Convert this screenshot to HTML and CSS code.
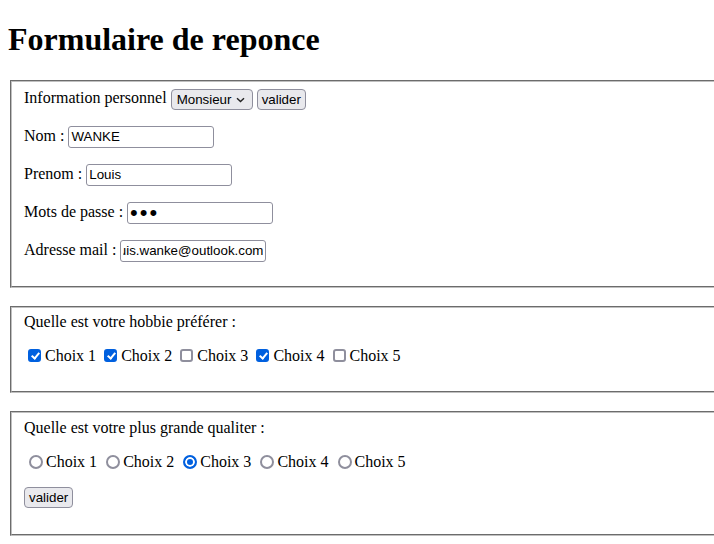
FILE: index.html
```html
<!DOCTYPE html>
<html lang="fr">
<head>
<meta charset="utf-8">
<title>Formulaire de reponce</title>
<link rel="stylesheet" href="styles.css">
</head>
<body class="page">
<h1 class="title">Formulaire de reponce</h1>
<form class="form">
  <fieldset class="box box-first">
    Information personnel
    <span class="select-wrap"><select class="control select">
      <option>Monsieur</option>
      <option>Madame</option>
    </select><svg class="chev" width="9" height="6" viewBox="0 0 9 6"><path d="M1 1.2 L4.5 4.6 L8 1.2" fill="none" stroke="#222" stroke-width="1.4"/></svg></span>
    <button type="button" class="control btn">valider</button>
    <p class="row">Nom : <input class="control field" type="text" value="WANKE"></p>
    <p class="row">Prenom : <input class="control field" type="text" value="Louis"></p>
    <p class="row">Mots de passe : <input class="control field field-pass" type="password" value="abc"></p>
    <p class="row">Adresse mail : <input class="control field field-end" type="email" value="louis.wanke@outlook.com"></p>
  </fieldset>
  <br>
  <fieldset class="box">
    Quelle est votre hobbie préférer :
    <p class="row">
      <label class="choice"><input type="checkbox" class="check" checked>Choix 1</label>
      <label class="choice"><input type="checkbox" class="check" checked>Choix 2</label>
      <label class="choice"><input type="checkbox" class="check">Choix 3</label>
      <label class="choice"><input type="checkbox" class="check" checked>Choix 4</label>
      <label class="choice"><input type="checkbox" class="check">Choix 5</label>
    </p>
  </fieldset>
  <br>
  <fieldset class="box">
    Quelle est votre plus grande qualiter :
    <p class="row">
      <label class="choice"><input type="radio" name="q" class="radio">Choix 1</label>
      <label class="choice"><input type="radio" name="q" class="radio">Choix 2</label>
      <label class="choice"><input type="radio" name="q" class="radio" checked>Choix 3</label>
      <label class="choice"><input type="radio" name="q" class="radio">Choix 4</label>
      <label class="choice"><input type="radio" name="q" class="radio">Choix 5</label>
    </p>
    <p class="row"><button type="button" class="control btn">valider</button></p>
  </fieldset>
</form>
</body>
</html>
```
FILE: styles.css
```css
html {
  background: #fff;
}
.page {
  margin: 0;
  padding: 8px;
  font-family: "Liberation Serif", "Times New Roman", serif;
  font-size: 16px;
  color: #000;
  background: #fff;
}
.title {
  font-size: 32px;
  font-weight: bold;
  margin: 13.44px 0 21.44px;
}
.form {
  margin: 0 -10px 0 0;
}
.box {
  margin: 0 2px;
  border: 2px groove #c0c0c0;
  border-right: none;
  padding: 5.6px 12px 10px;
  min-width: 0;
}
.box-first {
  padding-top: 7px;
  padding-bottom: 8px;
}
.row {
  margin: 16px 0;
}
.control {
  font-family: "Liberation Sans", Arial, sans-serif;
  font-size: 13.333px;
  color: #000;
  box-sizing: border-box;
  vertical-align: middle;
}
.field {
  width: 146px;
  height: 22px;
  padding: 1px 2px;
  border: 1px solid #8f8f9d;
  border-radius: 3px;
  background: #fff;
}
.field-pass {
  font-size: 22px;
  letter-spacing: 2px;
  padding: 0 2px;
}
.field-end {
  direction: rtl;
}
.btn {
  height: 21px;
  padding: 0 4px;
  border: 1px solid #8f8f9d;
  border-radius: 4px;
  background: #e9e9ed;
}
.select-wrap {
  position: relative;
  display: inline-block;
  vertical-align: middle;
}
.select {
  -webkit-appearance: none;
  appearance: none;
  display: block;
  width: 82px;
  height: 21px;
  padding: 0 18px 0 5px;
  border: 1px solid #8f8f9d;
  border-radius: 4px;
  background: #e9e9ed;
}
.chev {
  position: absolute;
  right: 8px;
  top: 8px;
  pointer-events: none;
}
.choice {
  margin: 0;
}
.check,
.radio {
  -webkit-appearance: none;
  appearance: none;
  position: relative;
  box-sizing: border-box;
  width: 13px;
  height: 13px;
  margin: 0 4px 0 4px;
  border: 2px solid #8f8f9d;
  background: #fff;
  vertical-align: -1px;
}
.check {
  border-radius: 3px;
}
.check:checked {
  background: #0060df;
  border-color: #0060df;
}
.check:checked::after {
  content: "";
  position: absolute;
  left: 2.5px;
  top: 0px;
  width: 3px;
  height: 6px;
  border: solid #fff;
  border-width: 0 2px 2px 0;
  transform: rotate(40deg);
}
.radio {
  border-radius: 50%;
  width: 14px;
  height: 14px;
  margin: 0 3px 0 5px;
  vertical-align: -2px;
}
.radio:checked {
  border-color: #0060df;
  background: #0060df;
  box-shadow: inset 0 0 0 2px #fff;
}
```
